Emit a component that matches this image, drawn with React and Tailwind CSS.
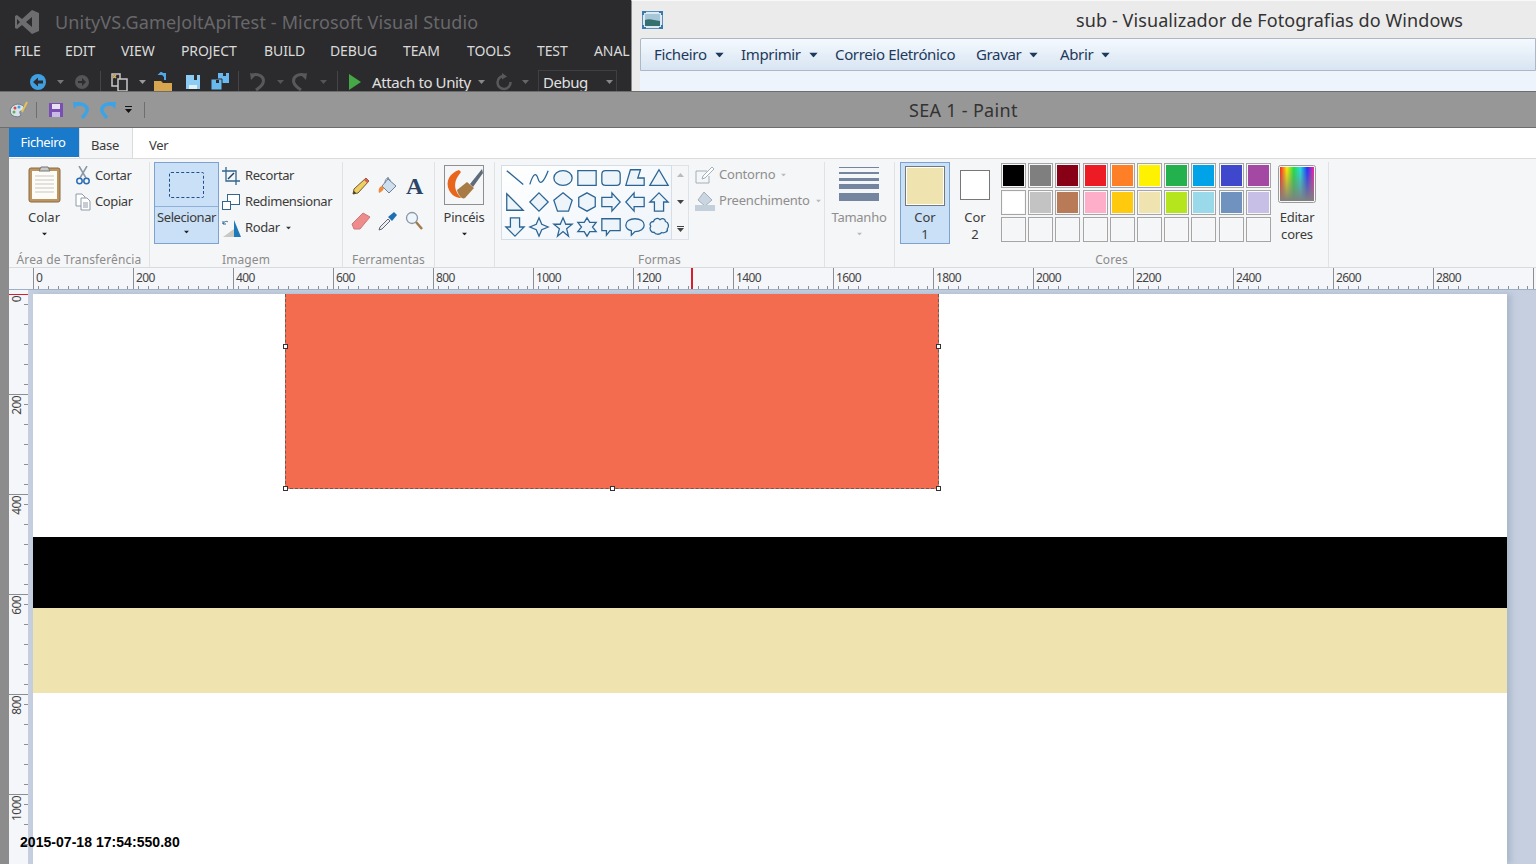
import React from "react";

const vsMenu = [
  ["FILE", "w-[51px]"],
  ["EDIT", "w-[56px]"],
  ["VIEW", "w-[60px]"],
  ["PROJECT", "w-[83px]"],
  ["BUILD", "w-[66px]"],
  ["DEBUG", "w-[73px]"],
  ["TEAM", "w-[64px]"],
  ["TOOLS", "w-[70px]"],
  ["TEST", "w-[57px]"],
  ["ANAL", "w-[40px]"],
];

const row1 = ["#000000", "#7f7f7f", "#880015", "#ed1c24", "#ff7f27", "#fff200", "#22b14c", "#00a2e8", "#3f48cc", "#a349a4"];
const row2 = ["#ffffff", "#c3c3c3", "#b97a57", "#ffaec9", "#ffc90e", "#efe4b0", "#b5e61d", "#99d9ea", "#7092be", "#c8bfe7"];
const row3 = Array(10).fill("#f5f6f7");

const shapes = [
  "M3 4L21 19",
  "M2 19C6 6 9 6 11 13S17 17 22 4",
  "M2 12a10 8 0 1 0 20 0a10 8 0 1 0-20 0Z",
  "M2 4H22V20H2Z",
  "M6 4H18Q22 4 22 8V16Q22 20 18 20H6Q2 20 2 16V8Q2 4 6 4Z",
  "M2 20L7 3H18L15 12H22V20Z",
  "M12 3L22 20H2Z",
  "M3 3L21 21H3Z",
  "M12 2L22 12L12 22L2 12Z",
  "M12 2L22 10L18 22H6L2 10Z",
  "M12 2L21 7V17L12 22L3 17V7Z",
  "M2 7H13V2L22 12L13 22V17H2Z",
  "M22 7H11V2L2 12L11 22V17H22Z",
  "M12 2L22 12H17V22H7V12H2Z",
  "M12 22L22 12H17V2H7V12H2Z",
  "M12 2L15 9L22 12L15 15L12 22L9 15L2 12L9 9Z",
  "M12 2L15 9H22L16 14L18 22L12 17L6 22L8 14L2 9H9Z",
  "M12 2L15 7H22L18 12L22 17H15L12 22L9 17H2L6 12L2 7H9Z",
  "M2 3H22V16H11L7 21V16H2Z",
  "M12 3C18 3 22 6 22 10S18 17 12 17L8 21V16C4 15 2 13 2 10C2 6 6 3 12 3Z",
  "M6 6C7 2 11 2 13 4C16 2 19 3 19 6C23 7 23 12 21 14C22 17 18 19 15 18C12 21 8 20 7 18C3 18 1 14 3 11C1 9 3 6 6 6Z",
];

const rulerX = [0, 200, 400, 600, 800, 1000, 1200, 1400, 1600, 1800, 2000, 2200, 2400, 2600, 2800, 3000];
const rulerY = [0, 200, 400, 600, 800, 1000];

const Caret = ({ className = "" }) => (
  <svg width="7" height="4" viewBox="0 0 7 4" className={className}>
    <path d="M0 0H7L3.5 4Z" fill="currentColor" />
  </svg>
);

const VsLogo = () => (
  <svg width="26" height="26" viewBox="0 0 26 26">
    <path d="M18 1L25 4V22L18 25L8 16L3 20L1 19V7L3 6L8 10ZM18 8L12 13L18 18ZM3 10V16L6 13Z" fill="#6d6d70" />
  </svg>
);

const VsToolbar = () => (
  <div className="flex items-center h-[24px] mt-[8px] pl-[28px] text-[#7a7a7c]">
    <svg width="20" height="20" viewBox="0 0 20 20" className="mr-[9px]">
      <circle cx="10" cy="10" r="8" fill="#3f9fe0" />
      <path d="M5 10L10 5.500V8.500H15V11.500H10V14.500Z" fill="#2d2d30" />
    </svg>
    <Caret className="mr-[9px] text-[#777]" />
    <svg width="18" height="18" viewBox="0 0 18 18" className="mr-[9px]">
      <circle cx="9" cy="9" r="7" fill="#555558" />
      <path d="M13 9L9 5V8H5V10H9V13Z" fill="#2d2d30" />
    </svg>
    <div className="w-px h-[22px] bg-[#454548] mr-[9px]" />
    <svg width="20" height="20" viewBox="0 0 20 20" className="mr-[9px]">
      <path d="M2 2H10V14H2Z" fill="none" stroke="#c8c8c8" strokeWidth="1.500" />
      <path d="M8 7H17V19H8Z" fill="#2d2d30" stroke="#c8c8c8" strokeWidth="1.500" />
      <path d="M3 3L6 6M6 3L3 6" stroke="#d9b45f" strokeWidth="1.500" />
    </svg>
    <Caret className="mr-[7px] text-[#999]" />
    <svg width="22" height="20" viewBox="0 0 22 20" className="mr-[10px]">
      <path d="M1 9H8L10 11H19V19H1Z" fill="#d7a64f" />
      <path d="M12 8V2H7L9 0M12 2L10 4" stroke="#4fa8e8" strokeWidth="2" fill="none" />
    </svg>
    <svg width="16" height="16" viewBox="0 0 16 16" className="mr-[9px]">
      <path d="M1 1H15V15H1Z" fill="#8ccbf4" />
      <path d="M9 1H12V6H9Z" fill="#2d2d30" />
      <path d="M4 11H12V15H4Z" fill="#dff0fb" />
    </svg>
    <svg width="20" height="20" viewBox="0 0 20 20" className="mr-[8px]">
      <path d="M8 1H19V11H8Z" fill="#69b8ee" />
      <path d="M1 7H12V18H1Z" fill="#69b8ee" stroke="#2d2d30" />
      <path d="M13 1H16V4H13ZM6 8H9V11H6Z" fill="#2d2d30" />
    </svg>
    <div className="w-px h-[22px] bg-[#454548] mr-[9px]" />
    <svg width="20" height="20" viewBox="0 0 20 20" className="mr-[9px]">
      <path d="M4 3C11 1 17 5 15 11C14 14 11 16 8 18" fill="none" stroke="#59595c" strokeWidth="3" />
      <path d="M2 1L8 3L3 8Z" fill="#59595c" />
    </svg>
    <Caret className="mr-[5px] text-[#555]" />
    <svg width="20" height="20" viewBox="0 0 20 20" className="mr-[11px]">
      <path d="M16 3C9 1 3 5 5 11C6 14 9 16 12 18" fill="none" stroke="#59595c" strokeWidth="3" />
      <path d="M18 1L12 3L17 8Z" fill="#59595c" />
    </svg>
    <Caret className="mr-[10px] text-[#555]" />
    <div className="w-px h-[22px] bg-[#454548] mr-[11px]" />
    <svg width="12" height="16" viewBox="0 0 12 16" className="mr-[11px]">
      <path d="M0 0L12 8L0 16Z" fill="#45a745" />
    </svg>
    <span className="text-[15px] leading-[24px] text-[#e0e0e0] w-[106px] whitespace-nowrap tracking-[-0.4px]">Attach to Unity</span>
    <Caret className="mr-[10px] text-[#888]" />
    <svg width="18" height="18" viewBox="0 0 18 18" className="mr-[9px]">
      <path d="M9 3A6.500 6.500 0 1 0 15.500 9" fill="none" stroke="#59595c" strokeWidth="2.500" />
      <path d="M7 0L12 3.500L7 6.500Z" fill="#59595c" />
    </svg>
    <Caret className="mr-[9px] text-[#666]" />
    <div className="flex items-center justify-between w-[79px] h-[24px] border border-[#3f3f42] pl-[4px] pr-[3px]">
      <span className="text-[15px] text-[#e0e0e0] tracking-[-0.5px]">Debug</span>
      <Caret className="text-[#888]" />
    </div>
  </div>
);

const VisualStudio = () => (
  <div className="w-[631px] bg-[#2b2b2d] overflow-hidden">
    <div className="flex items-center h-[38px] pl-[14px] pt-[6px]">
      <VsLogo />
      <span className="ml-[15px] text-[18px] text-[#68686b] whitespace-nowrap tracking-[0.15px]">UnityVS.GameJoltApiTest - Microsoft Visual Studio</span>
    </div>
    <div className="flex h-[24px] items-center pl-[14px] overflow-hidden">
      {vsMenu.map(([label, width]) => (
        <span key={label} className={`${width} shrink-0 text-[14px] text-[#dadada] whitespace-nowrap tracking-[-0.1px]`}>{label}</span>
      ))}
    </div>
    <VsToolbar />
  </div>
);

const PhotoViewer = () => {
  const items = [
    ["Ficheiro", true, "w-[87px]"],
    ["Imprimir", true, "w-[94px]"],
    ["Correio Eletrónico", false, "w-[141px]"],
    ["Gravar", true, "w-[84px]"],
    ["Abrir", true, "w-[70px]"],
  ];
  return (
    <div className="flex-1 bg-[#ebebeb] border-l border-[#8a8a8a] flex flex-col overflow-hidden border-t border-t-[#f8f8f8]">
      <div className="relative flex items-center h-[37px] pl-[10px]">
        <svg width="21" height="18" viewBox="0 0 21 18">
          <rect x="0.500" y="0.500" width="20" height="17" fill="#dbe9f4" stroke="#5c8fb5" />
          <path d="M3 3H18V15H3Z" fill="#a7c6d8" />
          <path d="M3 9C7 7 12 9 18 10V15H3Z" fill="#35706e" />
          <path d="M0 0H4V2H2V4H0ZM21 0V4H19V2H17V0ZM0 18V14H2V16H4V18ZM21 18H17V16H19V14H21Z" fill="#3a79ad" />
        </svg>
        <span className="ml-[413px] pt-[2px] text-[18px] text-[#333] whitespace-nowrap tracking-[0.1px]">sub - Visualizador de Fotografias do Windows</span>
      </div>
      <div className="flex items-center h-[33px] ml-[8px] pl-[13px] border border-[#aeb8c4] rounded-tl-[2px] bg-gradient-to-b from-[#f4f9fe] to-[#d8e5f2]">
        {items.map(([label, caret, width]) => (
          <div key={label} className={`${width} flex items-center`}>
            <span className="text-[15px] text-[#1e395b] whitespace-nowrap tracking-[-0.35px]">{label}</span>
            {caret && <Caret className="ml-[9px] text-[#1e395b] scale-125" />}
          </div>
        ))}
      </div>
      <div className="flex-1 ml-[8px] bg-[#eef4fb]" />
    </div>
  );
};

const QuickAccess = () => (
  <div className="flex items-center pl-[9px]">
    <svg width="20" height="20" viewBox="0 0 20 20">
      <path d="M2 8C5 3 12 3 15 7C17 10 15 11 12 11C10 11 11 14 12 15C10 18 4 17 2 14C1 12 1 10 2 8Z" fill="#d8e2ec" stroke="#6b7a8a" />
      <circle cx="6" cy="8" r="1.500" fill="#e0483e" />
      <circle cx="10" cy="7" r="1.500" fill="#3f9fe0" />
      <circle cx="5" cy="12" r="1.500" fill="#5db04c" />
      <path d="M13 12L18 2" stroke="#e2c256" strokeWidth="2" />
    </svg>
    <div className="w-px h-[16px] bg-[#6e6e6e] ml-[7px]" />
    <svg width="14" height="14" viewBox="0 0 14 14" className="ml-[12px]">
      <path d="M0 0H14V14H0Z" fill="#7a4fb5" />
      <path d="M3 1H11V6H3Z" fill="#e6e0f2" />
      <path d="M3 9H11V14H3Z" fill="#c8b9e6" />
    </svg>
    <svg width="18" height="18" viewBox="0 0 18 18" className="ml-[9px]">
      <path d="M3 4C10 1 16 5 15 10C14 13 12 15 10 17" fill="none" stroke="#3ca3e6" strokeWidth="3.500" />
      <path d="M1 1L8 1L2 8Z" fill="#3ca3e6" />
    </svg>
    <svg width="18" height="18" viewBox="0 0 18 18" className="ml-[9px]">
      <path d="M15 4C8 1 2 5 3 10C4 13 6 15 8 17" fill="none" stroke="#3ca3e6" strokeWidth="3.500" />
      <path d="M17 1L10 1L16 8Z" fill="#3ca3e6" />
    </svg>
    <div className="ml-[8px] flex flex-col items-center gap-[2px] text-[#111]">
      <div className="w-[7px] h-px bg-[#111]" />
      <Caret />
    </div>
    <div className="w-px h-[16px] bg-[#6e6e6e] ml-[12px]" />
  </div>
);

const Tabs = () => (
  <div className="flex h-[30px] bg-white text-[13px]">
    <div className="w-[70px] h-[29px] bg-[#1979ca] text-white flex items-center justify-center pr-[2px] tracking-[-0.4px]">Ficheiro</div>
    <div className="w-[54px] h-[30px] -mb-px relative bg-[#f5f6f7] border-x border-[#dadbdc] text-[#3b3b3b] flex items-center justify-center pt-[5px] pr-[2px] tracking-[-0.3px]">Base</div>
    <div className="pl-[16px] text-[#3b3b3b] flex items-center pt-[5px] tracking-[-0.3px]">Ver</div>
  </div>
);

const Group = ({ label, className, children }) => (
  <div className={`${className} flex flex-col border-r border-[#e1e2e3] mt-[3px] shrink-0`}>
    <div className="flex-1 flex min-h-0">{children}</div>
    <div className="h-[17px] text-[12px] leading-[19px] text-[#8b8b8b] text-center whitespace-nowrap tracking-[0.12px]">{label}</div>
  </div>
);

const SmallItem = ({ icon, label, caret, tight }) => (
  <div className="flex items-center h-[26px] whitespace-nowrap text-[13px] tracking-[-0.4px] text-[#3b3b3b]">
    <span className={`w-[22px] flex justify-center ${tight ? "mr-px" : "mr-[3px]"}`}>{icon}</span>
    {label}
    {caret && <Caret className="ml-[5px] scale-75" />}
  </div>
);

const ClipboardGroup = () => (
  <Group label="Área de Transferência" className="w-[141px]">
    <div className="w-[60px] ml-[5px] flex flex-col items-center text-[13px] text-[#3b3b3b] pt-[3px]">
      <svg width="33" height="38" viewBox="0 0 33 38">
        <rect x="1" y="3" width="31" height="34" rx="2" fill="#bd9562" stroke="#8a6a42" />
        <rect x="4" y="6" width="25" height="28" fill="#fdfcf6" />
        <path d="M7 11H26M7 15H26M7 19H26M7 23H26M7 27H26" stroke="#c7c7c7" />
        <path d="M11 6L13 2H20L22 6Z" fill="#c9c9c9" stroke="#777" />
      </svg>
      <span className="mt-[5px] leading-[18px]">Colar</span>
      <Caret className="mt-[6px] text-[#222] scale-75" />
    </div>
    <div className="pt-px -ml-[2px]">
      <SmallItem
        tight
        label="Cortar"
        icon={
          <svg width="14" height="20" viewBox="0 0 14 20">
            <path d="M3 0L10 12M11 0L4 12" stroke="#8a97a5" strokeWidth="1.500" />
            <circle cx="3.500" cy="15" r="2.700" fill="none" stroke="#2b6cb5" strokeWidth="1.500" />
            <circle cx="10.500" cy="15" r="2.700" fill="none" stroke="#2b6cb5" strokeWidth="1.500" />
          </svg>
        }
      />
      <SmallItem
        tight
        label="Copiar"
        icon={
          <svg width="16" height="18" viewBox="0 0 16 18">
            <path d="M1 1H7L10 4V13H1Z" fill="#fff" stroke="#8f9aa6" />
            <path d="M6 5H12L15 8V17H6Z" fill="#fff" stroke="#8f9aa6" />
            <path d="M8 10H13M8 12H13M8 14H13" stroke="#8f9aa6" />
          </svg>
        }
      />
    </div>
  </Group>
);

const ImageGroup = () => (
  <Group label="Imagem" className="w-[193px]">
    <div className="w-[65px] h-[82px] ml-[4px] flex flex-col border border-[#7da2ce] bg-[#c9e0f7] text-[13px] text-[#3b3b3b]">
      <div className="h-[44px] flex items-center justify-center border-b border-[#8fb0d8]">
        <div className="w-[35px] h-[26px] border border-dashed border-[#1e4f8f] rounded-[2px]" />
      </div>
      <div className="flex-1 flex flex-col items-center">
        <span className="leading-[18px] mt-px tracking-[-0.45px] whitespace-nowrap">Selecionar</span>
        <Caret className="mt-[4px] text-[#222] scale-75" />
      </div>
    </div>
    <div className="pt-px ml-px">
      <SmallItem
        label="Recortar"
        icon={
          <svg width="18" height="18" viewBox="0 0 18 18" fill="none" stroke="#33658f">
            <path d="M4 0V14H18M0 4H14V18" strokeWidth="1.300" />
            <path d="M6 12L12 6" stroke="#1e3f66" strokeWidth="1.500" />
          </svg>
        }
      />
      <SmallItem
        label="Redimensionar"
        icon={
          <svg width="18" height="16" viewBox="0 0 18 16" fill="#fff" stroke="#33658f">
            <rect x="5.500" y="0.500" width="12" height="10" />
            <rect x="0.500" y="7.500" width="8" height="8" />
          </svg>
        }
      />
      <SmallItem
        label="Rodar"
        caret
        icon={
          <svg width="19" height="18" viewBox="0 0 19 18">
            <path d="M1 18L12 18V10Z" fill="#c9c9c2" />
            <path d="M12 1V18H19Z" fill="#1f78b8" />
            <path d="M1 5C2 2 5 2 6 3M1 2V5H4" fill="none" stroke="#33658f" />
          </svg>
        }
      />
    </div>
  </Group>
);

const ToolsGroup = () => (
  <Group label="Ferramentas" className="w-[92px]">
    <div className="grid grid-cols-3 grid-rows-2 w-[80px] h-[70px] ml-[5px] mt-[6px] place-items-center">
      <svg width="20" height="20" viewBox="0 0 20 20">
        <path d="M2 18L3 13L15 2L18 5L7 17Z" fill="#f0cf62" stroke="#6b5a2e" />
        <path d="M15 2L18 5L16 7L13 4Z" fill="#d9605a" />
        <path d="M2 18L3 15L5 17Z" fill="#333" />
      </svg>
      <svg width="20" height="20" viewBox="0 0 20 20">
        <path d="M10 3L18 10L11 17L4 10Z" fill="#cfdfee" stroke="#6a8299" />
        <path d="M10 3V1M7 7C7 1 12 1 12 5" fill="none" stroke="#6a8299" />
        <path d="M4 10C1 11 0 14 1 17C3 16 5 15 6 12Z" fill="#f08a3c" />
      </svg>
      <span className="text-[24px] leading-none font-bold text-[#2a4568] font-['Liberation_Serif',serif]">A</span>
      <svg width="20" height="18" viewBox="0 0 20 18">
        <path d="M1 12L12 1L19 5L9 17L3 17Z" fill="#ee8b8b" stroke="#c77" />
      </svg>
      <svg width="20" height="20" viewBox="0 0 20 20">
        <path d="M1 19L2 16L10 8L12 10L4 18Z" fill="#e8eef4" stroke="#667" />
        <path d="M10 6L14 10L19 4L16 1Z" fill="#1e6fb5" />
      </svg>
      <svg width="19" height="20" viewBox="0 0 19 20" fill="none">
        <circle cx="7" cy="7" r="5.500" fill="#eef5fb" stroke="#8a97a5" strokeWidth="1.300" />
        <path d="M11 11L17 18" stroke="#a07c4d" strokeWidth="2.500" />
      </svg>
    </div>
  </Group>
);

const BrushGroup = () => (
  <Group label="" className="w-[60px]">
    <div className="flex-1 flex flex-col items-center text-[13px] text-[#3b3b3b] pt-[3px] pr-px tracking-[-0.2px]">
      <svg width="40" height="40" viewBox="0 0 40 40">
        <rect x="0.500" y="0.500" width="39" height="39" fill="#f4f6f8" stroke="#8f8f8f" />
        <path d="M15 5C6 8 1 16 5 25C8 31 13 33 17 33C13 28 6 20 17 7Z" fill="#e8651c" />
        <path d="M13 25L23 17L30 23L21 33C18 35 14 30 13 25Z" fill="#a87a45" />
        <path d="M26 19L38 4L39 8L29 22Z" fill="#5f6b78" />
      </svg>
      <span className="mt-[3px] leading-[18px]">Pincéis</span>
      <Caret className="mt-[6px] text-[#222] scale-75" />
    </div>
  </Group>
);

const ShapesGroup = () => (
  <Group label="Formas" className="w-[330px]">
    <div className="flex mt-[3px] ml-[6px] h-[75px]">
      <div className="w-[171px] grid grid-cols-7 grid-rows-3 bg-gradient-to-br from-white to-[#eef4fa] border border-[#d5dde6] pl-px">
        {shapes.map((d, i) => (
          <div key={i} className="flex items-center justify-center">
            <svg width="22" height="22" viewBox="0 0 24 24">
              <path d={d} fill={i < 2 ? "none" : "#edf5fb"} stroke="#2c6594" strokeWidth="1.400" strokeLinejoin="miter" />
            </svg>
          </div>
        ))}
      </div>
      <div className="w-[17px] flex flex-col items-center justify-between py-[7px] border border-l-0 border-[#dfe3e8] text-[#444]">
        <svg width="7" height="4" viewBox="0 0 7 4" className="text-[#bbb]"><path d="M0 4H7L3.500 0Z" fill="currentColor" /></svg>
        <Caret />
        <div className="flex flex-col items-center gap-px">
          <div className="w-[7px] h-px bg-[#444]" />
          <Caret />
        </div>
      </div>
    </div>
    <div className="ml-[6px] text-[13px] text-[#8e8e8e] tracking-[-0.2px]">
      <div className="flex items-center h-[26px]">
        <svg width="20" height="18" viewBox="0 0 20 18" className="mr-[4px]">
          <path d="M1 5H12M1 5V17H14V10" fill="none" stroke="#a3afba" />
          <path d="M7 13L8 10L17 1L19 3L10 12Z" fill="#fff" stroke="#a3afba" />
        </svg>
        Contorno
        <Caret className="ml-[5px] text-[#bbb] scale-75" />
      </div>
      <div className="flex items-center h-[26px] whitespace-nowrap">
        <svg width="20" height="20" viewBox="0 0 20 20" className="mr-[4px]">
          <path d="M9 1L17 9L10 15L3 9Z" fill="#c9d6e2" stroke="#a3afba" />
          <path d="M0 14H20V20H0Z" fill="#c3d0dc" />
        </svg>
        Preenchimento
        <Caret className="ml-[5px] text-[#bbb] scale-75" />
      </div>
    </div>
  </Group>
);

const SizeGroup = () => (
  <Group label="" className="w-[70px]">
    <div className="flex-1 flex flex-col items-center text-[13px] text-[#8e8e8e] pt-[5px] pr-px tracking-[-0.25px]">
      <div className="w-[40px] flex flex-col">
        <div className="h-px bg-[#74869f]" />
        <div className="h-[2px] bg-[#74869f] mt-[4px]" />
        <div className="h-[3px] bg-[#74869f] mt-[4px]" />
        <div className="h-[5px] bg-[#74869f] mt-[3px]" />
        <div className="h-[8px] bg-[#74869f] mt-[4px]" />
      </div>
      <span className="mt-[7px] leading-[18px]">Tamanho</span>
      <Caret className="mt-[6px] text-[#bbb] scale-75" />
    </div>
  </Group>
);

const ColorsGroup = () => (
  <Group label="Cores" className="w-[434px]">
    <div className="w-[50px] h-[82px] ml-[5px] border border-[#7da2ce] bg-[#c9e0f7] flex flex-col items-center text-[13px] text-[#3b3b3b]">
      <div className="w-[40px] h-[40px] mt-[3px] border border-[#777] p-px bg-white">
        <div className="w-full h-full bg-[#efe4b0]" />
      </div>
      <span className="mt-[3px] leading-[17px] text-center">Cor<br />1</span>
    </div>
    <div className="w-[50px] flex flex-col items-center text-[13px] text-[#3b3b3b]">
      <div className="w-[30px] h-[30px] mt-[8px] border border-[#777] bg-white" />
      <span className="mt-[9px] leading-[17px] text-center">Cor<br />2</span>
    </div>
    <div className="ml-px mt-px grid grid-cols-10 grid-rows-3 w-[272px] h-[81px]">
      {[...row1, ...row2, ...row3].map((c, i) => (
        <div key={i} className="w-[25px] h-[25px] border border-[#a5a5a5] p-px bg-[#f8f8f8]">
          <div className="w-full h-full" style={{ background: c }} />
        </div>
      ))}
    </div>
    <div className="w-[48px] flex flex-col items-center text-[13px] text-[#3b3b3b]">
      <svg width="38" height="38" viewBox="0 0 38 38" className="mt-[3px]">
        <defs>
          <linearGradient id="hue">
            <stop offset="0" stopColor="#ff2020" />
            <stop offset="0.2" stopColor="#ffee00" />
            <stop offset="0.4" stopColor="#20e040" />
            <stop offset="0.6" stopColor="#20e0e0" />
            <stop offset="0.8" stopColor="#2030ff" />
            <stop offset="1" stopColor="#ff20a0" />
          </linearGradient>
          <linearGradient id="fade" x2="0" y2="1">
            <stop offset="0" stopColor="#808080" stopOpacity="0" />
            <stop offset="1" stopColor="#808080" />
          </linearGradient>
        </defs>
        <rect x="0.500" y="0.500" width="37" height="37" rx="2" fill="#f8f8f8" stroke="#9a9a9a" />
        <rect x="2" y="2" width="34" height="34" fill="url(#hue)" />
        <rect x="2" y="2" width="34" height="34" fill="url(#fade)" />
      </svg>
      <span className="mt-[6px] leading-[17px] text-center tracking-[-0.2px]">Editar<br />cores</span>
    </div>
  </Group>
);

const Ribbon = () => (
  <div className="flex h-[110px] bg-[#f5f6f7] border-t border-[#dadbdc] border-b">
    <ClipboardGroup />
    <ImageGroup />
    <ToolsGroup />
    <BrushGroup />
    <ShapesGroup />
    <SizeGroup />
    <ColorsGroup />
  </div>
);

const HorizontalRuler = () => (
  <div className="relative flex h-[22px] pl-[24px] bg-[#f5f6f9] border-b border-[#9fb0c4] overflow-hidden">
    {rulerX.map((n) => (
      <div key={n} className="relative w-[100px] shrink-0 border-l border-[#8a8f96]">
        {n < 3000 && <span className="absolute left-[2px] top-[2px] text-[12px] leading-[16px] text-[#444] tracking-[-0.6px]">{n}</span>}
        <div className="absolute bottom-0 left-0 w-full flex justify-around">
          {Array.from({ length: 10 }).map((_, i) => (
            <div key={i} className="w-px h-[3px] bg-[#8a8f96]" />
          ))}
        </div>
      </div>
    ))}
    <div className="absolute left-[682px] top-0 bottom-0 w-[2px] bg-[#d81e2c]" />
  </div>
);

const VerticalRuler = () => (
  <div className="relative w-[19px] shrink-0 bg-[#f5f6f9] overflow-hidden pt-[4px]">
    {rulerY.map((n) => (
      <div key={n} className="relative h-[100px] border-t border-[#8a8f96]">
        <span className="absolute left-px top-px text-[12px] leading-[14px] text-[#444] [writing-mode:vertical-rl] rotate-180 tracking-[-0.6px]">{n}</span>
        <div className="absolute right-0 top-0 h-full flex flex-col justify-around">
          {Array.from({ length: 5 }).map((_, i) => (
            <div key={i} className="w-[4px] h-px bg-[#8a8f96]" />
          ))}
        </div>
      </div>
    ))}
    <div className="absolute top-[4px] left-0 w-full h-px bg-[#d81e2c]" />
  </div>
);

const Handle = ({ className }) => (
  <div className={`absolute w-[5px] h-[5px] bg-white border border-[#333] ${className}`} />
);

const Canvas = () => (
  <div className="flex-1 flex flex-col pt-[4px] pl-[5px] pr-[29px] bg-[#c5cfe0] min-w-0">
    <div className="flex-1 flex flex-col bg-white shadow-[4px_0_6px_#aab6ca]">
      <div className="h-[243px] pl-[252px]">
        <div className="relative w-[654px] h-[195px] bg-[#f36c4f] border border-dashed border-[#6a5a55] border-t-0">
          <Handle className="-left-[3px] top-[50px]" />
          <Handle className="-right-[3px] top-[50px]" />
          <Handle className="-left-[3px] -bottom-[3px]" />
          <Handle className="left-[324px] -bottom-[3px]" />
          <Handle className="-right-[3px] -bottom-[3px]" />
        </div>
      </div>
      <div className="h-[71px] bg-black" />
      <div className="h-[85px] bg-[#efe4b0]" />
    </div>
  </div>
);

const App = () => (
  <div className="relative w-[1536px] h-[864px] overflow-hidden flex flex-col font-['Noto_Sans',sans-serif]">
    <div className="flex h-[91px]">
      <VisualStudio />
      <PhotoViewer />
    </div>
    <div className="flex items-center h-[37px] bg-[#979797] border-y border-[#6d6d6d] relative">
      <QuickAccess />
      <span className="absolute left-[909px] top-[5px] text-[18px] text-[#333] tracking-[0.3px]">SEA 1 - Paint</span>
    </div>
    <div className="flex-1 flex min-h-0">
      <div className="w-[9px] shrink-0 bg-[#8c8c8c]" />
      <div className="flex-1 flex flex-col min-w-0">
        <Tabs />
        <Ribbon />
        <HorizontalRuler />
        <div className="flex-1 flex min-h-0">
          <VerticalRuler />
          <Canvas />
        </div>
      </div>
    </div>
    <span className="absolute left-[20px] top-[834px] text-[14px] leading-[16px] font-bold text-black font-['Liberation_Sans',sans-serif] tracking-[0.04px]">2015-07-18 17:54:550.80</span>
  </div>
);

export default App;
